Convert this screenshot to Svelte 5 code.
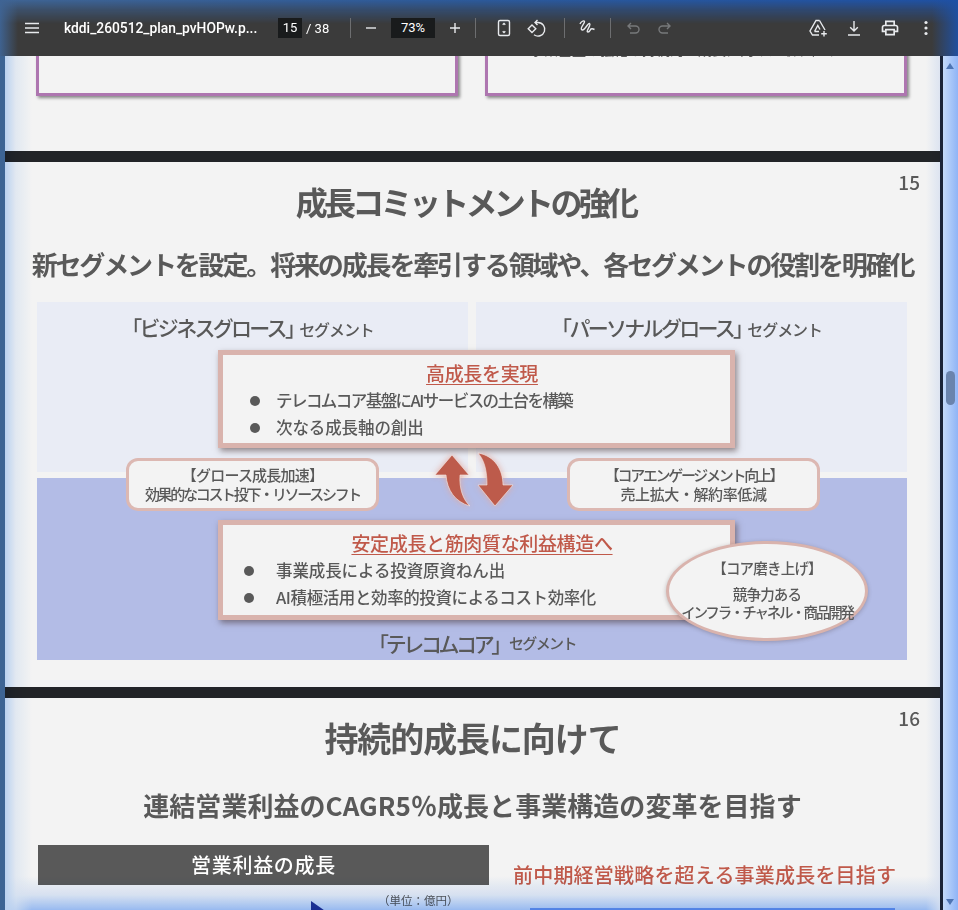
<script>
  let page = 15;
  let total = 38;
  let zoom = 73;

  // katakana-heavy lines sit tighter in the slide's font
  const growthPoints = [
    { text: 'テレコムコア基盤にAIサービスの土台を構築', fit: 'tight' },
    { text: '次なる成長軸の創出', fit: '' }
  ];
  const corePoints = [
    { text: '事業成長による投資原資ねん出', fit: '' },
    { text: 'AI積極活用と効率的投資によるコスト効率化', fit: 'mid' }
  ];
</script>

<div class="app">
  <header class="toolbar">
    <button class="icon menu" aria-label="menu">
      <svg viewBox="0 0 24 24"><path d="M5 7.500h14M5 12h14M5 16.500h14" /></svg>
    </button>
    <span class="filename">kddi_260512_plan_pvHOPw.p...</span>
    <span class="num page-num">{page}</span>
    <span class="total">/ {total}</span>
    <i class="sep first"></i>
    <button class="icon minus" aria-label="zoom out">
      <svg viewBox="0 0 24 24"><path d="M7 12h10" /></svg>
    </button>
    <span class="num zoom-num">{zoom}%</span>
    <button class="icon plus" aria-label="zoom in">
      <svg viewBox="0 0 24 24"><path d="M7 12h10M12 7v10" /></svg>
    </button>
    <i class="sep after-plus"></i>
    <button class="icon fit" aria-label="fit to page">
      <svg viewBox="0 0 24 24"><rect x="6.500" y="4.500" width="11" height="15" rx="1.500" /><path d="M10.700 8.700 12 7.500l1.300 1.200M10.700 15.300 12 16.500l1.300-1.200" /></svg>
    </button>
    <button class="icon rotate" aria-label="rotate">
      <svg viewBox="0 0 24 24"><path d="M8 9 11.800 12.800 8 16.600 4.200 12.800z" /><path d="M11 6.500h3a6.800 6.800 0 1 1-4 12.300M13.500 4 11 6.500 13.500 9" /></svg>
    </button>
    <i class="sep after-rotate"></i>
    <button class="icon draw" aria-label="annotate">
      <svg viewBox="0 0 24 24"><path d="M5 8c1-2.500 4-4 4.500-2.500S5 11.500 6.500 13.500s4-2 6-4.500 3-1.500 2 1-3.500 6-1.500 6 2-2.500 3-3 2.500 0 3.500.5" /></svg>
    </button>
    <i class="sep after-draw"></i>
    <button class="icon muted undo" aria-label="undo">
      <svg viewBox="0 0 24 24"><path d="M10 7 7 10l3 3M7 10h7.500a3.500 3.500 0 0 1 0 7H9" /></svg>
    </button>
    <button class="icon muted redo" aria-label="redo">
      <svg viewBox="0 0 24 24"><path d="m14 7 3 3-3 3M17 10H9.500a3.500 3.500 0 0 0 0 7H15" /></svg>
    </button>
    <span class="spacer"></span>
    <button class="icon" aria-label="save to drive">
      <svg viewBox="0 0 24 24"><path d="M13.500 4.500H10L4 15l2.500 4H13M13.500 4.500 19 14" /><path d="M8.500 15.500l3.300-6 2.200 4M8.500 15.500H13" /><path d="M18 15v5.500M15.200 17.800h5.600" /></svg>
    </button>
    <button class="icon" aria-label="download">
      <svg viewBox="0 0 24 24"><path d="M12 5v10M8.200 11.200 12 15l3.800-3.800M6 19h12" /></svg>
    </button>
    <button class="icon solid small" aria-label="print">
      <svg viewBox="0 0 24 24"><path d="M19 8h-1V3H6v5H5c-1.660 0-3 1.340-3 3v6h4v4h12v-4h4v-6c0-1.660-1.340-3-3-3zM8 5h8v3H8V5zm8 12v2H8v-4h8v2zm2-2v-2H6v2H4v-4c0-.55.45-1 1-1h14c.55 0 1 .45 1 1v4h-2z" /></svg>
    </button>
    <button class="icon solid" aria-label="more">
      <svg viewBox="0 0 24 24"><circle cx="12" cy="6.500" r="1.600" /><circle cx="12" cy="12" r="1.600" /><circle cx="12" cy="17.500" r="1.600" /></svg>
    </button>
  </header>

  <div class="viewer">
    <main class="pages">
      <section class="page tail">
        <div class="purple-card"></div>
        <div class="purple-card"><p>事業基盤の強化と持続的な成長に向けた取り組み</p></div>
      </section>

      <section class="page slide">
        <span class="page-no">15</span>
        <h1>成長コミットメントの強化</h1>
        <h2>新セグメントを設定。将来の成長を牽引する領域や、各セグメントの役割を明確化</h2>

        <div class="diagram">
          <div class="panel light"><b>「ビジネスグロース」</b><small>セグメント</small></div>
          <div class="panel light"><b>「パーソナルグロース」</b><small>セグメント</small></div>
          <div class="panel blue"><b>「テレコムコア」</b><small>セグメント</small></div>

          <div class="card growth">
            <h3>高成長を実現</h3>
            <ul>
              {#each growthPoints as point}
                <li class={point.fit}>{point.text}</li>
              {/each}
            </ul>
          </div>

          <div class="pill left-pill">
            <span>【グロース成長加速】</span>
            <span class="narrow">効果的なコスト投下・リソースシフト</span>
          </div>
          <div class="pill right-pill">
            <span class="narrow">【コアエンゲージメント向上】</span>
            <span class="wide">売上拡大・解約率低減</span>
          </div>

          <svg class="arrows" viewBox="430 450 88 60">
            <path d="M452 455 469 475H460C459 488 463 500 470 506 455 502 447 490 446 475H435Z" />
            <path d="M478 453C495 456 503 470 503 485H513L495 506 478 485H487C487 472 485 461 478 453Z" />
          </svg>

          <div class="card core">
            <h3>安定成長と筋肉質な利益構造へ</h3>
            <ul>
              {#each corePoints as point}
                <li class={point.fit}>{point.text}</li>
              {/each}
            </ul>
          </div>

          <div class="oval">
            <span class="oval-head">【コア磨き上げ】</span>
            <span>競争力ある</span>
            <span class="narrow">インフラ・チャネル・商品開発</span>
          </div>
        </div>
      </section>

      <section class="page slide next">
        <span class="page-no">16</span>
        <h1>持続的成長に向けて</h1>
        <h2>連結営業利益のCAGR5％成長と事業構造の変革を目指す</h2>
        <div class="columns">
          <div>
            <div class="dark-head">営業利益の成長</div>
            <div class="unit">（単位：億円）</div>
            <svg class="marker" viewBox="0 0 20 14"><path d="M0 0 20 14H0Z" /></svg>
          </div>
          <div>
            <div class="red-head">前中期経営戦略を超える事業成長を目指す</div>
            <div class="rule"></div>
          </div>
        </div>
      </section>
    </main>

    <aside class="scrollbar">
      <i class="up"></i>
      <i class="thumb"></i>
      <i class="down"></i>
    </aside>
  </div>

  <div class="glow"></div>
</div>

<style>
  :global(body) {
    margin: 0;
    background: #222427;
  }

  .app {
    position: relative;
    display: flex;
    flex-direction: column;
    width: 958px;
    height: 910px;
    overflow: hidden;
    font-family: "Noto Sans CJK JP", "Noto Sans", sans-serif;
    color: #595959;
  }

  /* toolbar */
  .toolbar {
    position: relative;
    z-index: 3;
    display: flex;
    align-items: center;
    flex: none;
    height: 56px;
    padding: 0 16px;
    box-sizing: border-box;
    background: #3b3b3b;
    color: #fff;
    font-family: Roboto, sans-serif;
    font-size: 13px;
  }

  .toolbar::before {
    content: '';
    position: absolute;
    inset: 0;
    pointer-events: none;
    background: linear-gradient(90deg, #3f6494, #2c5a9c 50%, #1f51a4);
    mask-image: linear-gradient(180deg, #000 0, rgba(0, 0, 0, 0.55) 9px, transparent 24px);
  }

  .toolbar::after {
    content: '';
    position: absolute;
    inset: 0;
    pointer-events: none;
    background:
      linear-gradient(90deg, rgba(63, 100, 148, 0.95), rgba(63, 100, 148, 0) 18px),
      linear-gradient(270deg, rgba(31, 81, 164, 0.95), rgba(31, 81, 164, 0) 26px);
  }

  .icon {
    position: relative;
    z-index: 1;
    flex: none;
    width: 32px;
    height: 32px;
    padding: 4px;
    border: 0;
    background: none;
    color: #e8eaed;
  }

  .icon svg {
    display: block;
    width: 24px;
    height: 24px;
    fill: none;
    stroke: currentColor;
    stroke-width: 1.400;
  }

  .icon.solid svg {
    fill: currentColor;
    stroke: none;
  }

  .icon.small svg {
    width: 20px;
    height: 20px;
    margin: 2px;
  }

  .icon.muted {
    color: #77797b;
  }

  .filename {
    position: relative;
    z-index: 1;
    width: 194px;
    margin-left: 16px;
    font-size: 13.800px;
    font-weight: 500;
    white-space: nowrap;
  }

  .num {
    position: relative;
    z-index: 1;
    height: 20px;
    line-height: 20px;
    background: #191b1c;
    text-align: center;
  }

  .page-num {
    width: 24px;
    margin-left: 20px;
  }

  .total {
    position: relative;
    z-index: 1;
    margin-left: 4px;
    width: 24px;
    white-space: nowrap;
  }

  .sep {
    position: relative;
    z-index: 1;
    flex: none;
    width: 1px;
    height: 20px;
    background: #6d6e70;
  }

  .first {
    margin: 0 4px 0 20px;
  }

  .zoom-num {
    width: 44px;
    margin: 0 4px;
  }

  .after-plus {
    margin: 0 12px 0 4px;
  }

  .after-rotate {
    margin: 0 6px 0 12px;
  }

  .after-draw {
    margin: 0 6px 0 7px;
  }

  .spacer {
    flex: 1;
  }

  .toolbar .icon + .icon:not(.rotate):not(.redo) {
    margin-left: 4px;
  }

  /* page column */
  .viewer {
    display: flex;
    flex: 1;
    min-height: 0;
    background: linear-gradient(90deg, #3d6494 5px, #222427 5px, #222427 940px, #1a2438 940px);
  }

  .pages {
    flex: none;
    width: 935px;
    margin-left: 5px;
    margin-right: 3px;
    display: flex;
    flex-direction: column;
    gap: 11px;
  }

  .page {
    flex: none;
    background: #f3f3f3;
    box-sizing: border-box;
  }

  .tail {
    display: grid;
    grid-template-columns: 422px 422px;
    grid-template-rows: 40px;
    justify-content: space-between;
    align-items: end;
    height: 95px;
    overflow: hidden;
    padding: 0 33px 55px 31px;
  }

  .purple-card {
    height: 70px;
    border: 3px solid #ae76b0;
    box-sizing: border-box;
    background: #f3f3f3;
    box-shadow: 2px 2px 3px rgba(0, 0, 0, 0.45);
  }

  .purple-card p {
    margin: 10px 0 0 -24px;
    font-size: 14px;
    line-height: 20px;
    text-align: center;
    color: #595959;
  }

  .slide {
    position: relative;
    height: 525px;
    padding: 0 32px;
  }

  .next {
    height: 300px;
  }

  .page-no {
    position: absolute;
    top: 8px;
    right: 20px;
    font-size: 19px;
    font-weight: 500;
    line-height: 24px;
  }

  h1 {
    margin: 0;
    padding: 16px 14px 0 0;
    font-size: 32px;
    line-height: 46px;
    font-weight: 700;
    text-align: center;
    letter-spacing: -3.700px;
  }

  h2 {
    margin: 21px -20px 0;
    font-size: 26px;
    line-height: 38px;
    font-weight: 700;
    text-align: center;
    letter-spacing: -2.150px;
    white-space: nowrap;
  }

  /* diagram */
  .diagram {
    position: relative;
    display: grid;
    grid-template-columns: 431px 431px;
    grid-template-rows: 170px 182px;
    gap: 6px 8px;
    margin-top: 19px;
    height: 358px;
  }

  .panel {
    display: flex;
    justify-content: center;
    align-items: baseline;
    padding: 11px 10px 0 0;
    box-sizing: border-box;
    background: #e9ecf5;
  }

  .panel.blue {
    grid-column: 1 / 3;
    align-items: flex-end;
    padding: 0 0 3px;
    background: #b3bce6;
  }

  .panel b {
    font-size: 21px;
    line-height: 28px;
    font-weight: 500;
    letter-spacing: -2.700px;
  }

  .panel small {
    margin-left: -4px;
    font-size: 16px;
    line-height: 28px;
    font-weight: 500;
    letter-spacing: -1.100px;
  }

  .panel.blue b {
    letter-spacing: -3.400px;
  }

  .panel.blue small {
    margin-left: 0;
    font-size: 15px;
    letter-spacing: -1.600px;
  }

  .card {
    position: absolute;
    left: 181px;
    width: 517px;
    box-sizing: border-box;
    border: 5px solid #d9b3ad;
    background: #f3f3f3;
    box-shadow: 2px 3px 6px rgba(70, 50, 50, 0.55);
  }

  .growth {
    top: 48px;
    height: 98px;
  }

  .core {
    top: 218px;
    height: 100px;
  }

  .card h3 {
    margin: 0 0 1px;
    padding: 4px 0 0 11px;
    font-size: 19px;
    line-height: 27px;
    font-weight: 500;
    text-align: center;
    color: #c0594a;
    text-decoration: underline;
    text-underline-offset: 3px;
    text-decoration-thickness: 1px;
    letter-spacing: -0.350px;
  }

  .card ul {
    margin: 0;
    padding: 0;
    list-style: none;
  }

  .card li {
    position: relative;
    width: fit-content;
    padding-left: 53px;
    font-size: 16.500px;
    line-height: 27px;
    font-weight: 500;
    letter-spacing: -0.100px;
  }

  .card li.tight {
    letter-spacing: -1.550px;
  }

  .card li.mid {
    letter-spacing: -0.400px;
  }

  .card li::before {
    content: '';
    position: absolute;
    left: 27px;
    top: 9px;
    width: 10px;
    height: 10px;
    border-radius: 50%;
    background: #595959;
  }

  .core li::before {
    left: 21px;
  }

  .pill {
    position: absolute;
    top: 156px;
    display: flex;
    flex-direction: column;
    align-items: center;
    width: 253px;
    height: 53px;
    box-sizing: border-box;
    padding-top: 4px;
    border: 3px solid #dcb8b2;
    border-radius: 12px;
    background: #f3f3f3;
    font-size: 15px;
    line-height: 19px;
    font-weight: 500;
    letter-spacing: -0.800px;
    white-space: nowrap;
  }

  .pill .narrow {
    letter-spacing: -2.300px;
  }

  .pill .wide {
    letter-spacing: -0.400px;
  }

  .left-pill {
    left: 89px;
  }

  .right-pill {
    left: 530px;
  }

  .arrows {
    position: absolute;
    left: 393px;
    top: 148px;
    width: 88px;
    height: 60px;
    overflow: visible;
    fill: #bd5b4b;
    stroke: #f5ece9;
    stroke-width: 0.600;
    filter: drop-shadow(0 0 3px rgba(226, 170, 160, 0.95));
  }

  .oval {
    position: absolute;
    left: 629px;
    top: 239px;
    display: flex;
    flex-direction: column;
    align-items: center;
    width: 202px;
    height: 100px;
    box-sizing: border-box;
    padding-top: 15px;
    border: 3px solid #d9b3ad;
    border-radius: 50%;
    background: #f3f3f3;
    box-shadow: 0 1px 4px rgba(70, 50, 50, 0.3);
    font-size: 14.500px;
    line-height: 18px;
    font-weight: 500;
    letter-spacing: -0.800px;
    white-space: nowrap;
  }

  .oval-head {
    margin-bottom: 8px;
  }

  .oval .narrow {
    letter-spacing: -2.200px;
  }

  /* next slide */
  .next h1 {
    padding: 17px 0 0;
    font-size: 34px;
    letter-spacing: -1.100px;
  }

  .next h2 {
    margin-top: 25px;
    letter-spacing: 0.050px;
  }

  .columns {
    display: grid;
    grid-template-columns: 451px 382px;
    gap: 24px;
    margin: 21px 0 0 1px;
  }

  .dark-head {
    height: 40px;
    line-height: 40px;
    background: #595959;
    color: #fff;
    font-size: 20px;
    font-weight: 500;
    text-align: center;
    letter-spacing: 0.700px;
  }

  .unit {
    margin: 7px 0 0 340px;
    font-size: 11.500px;
    line-height: 16px;
    white-space: nowrap;
    letter-spacing: 0;
  }

  .marker {
    display: block;
    width: 20px;
    height: 14px;
    margin: -7px 0 0 273px;
    fill: #253a94;
  }

  .red-head {
    margin-top: 15px;
    color: #c0594a;
    font-size: 20px;
    line-height: 30px;
    font-weight: 500;
    white-space: nowrap;
    letter-spacing: 0.200px;
  }

  .rule {
    height: 2px;
    margin: 18px 0 0 17px;
    background: #7fa8e8;
  }

  /* scrollbar */
  .scrollbar {
    position: relative;
    flex: none;
    width: 15px;
    background: linear-gradient(90deg, #c3dafa, #8fb4f6);
  }

  .scrollbar i {
    position: absolute;
  }

  .up,
  .down {
    left: 3px;
    width: 0;
    height: 0;
    border-left: 4.500px solid transparent;
    border-right: 4.500px solid transparent;
  }

  .up {
    top: 7px;
    border-bottom: 6px solid #4e75b4;
  }

  .down {
    bottom: 5px;
    border-top: 6px solid #4e75b4;
  }

  .thumb {
    top: 315px;
    left: 3px;
    width: 9px;
    height: 34px;
    border-radius: 5px;
    background: #6a84ad;
  }

  /* window glow over the page edges, multiplied so dark parts stay dark */
  .glow {
    position: absolute;
    top: 56px;
    bottom: 0;
    left: 5px;
    width: 935px;
    z-index: 2;
    pointer-events: none;
    mix-blend-mode: multiply;
    background:
      linear-gradient(90deg, rgba(196, 220, 252, 1), rgba(226, 238, 252, 0.6) 11px, rgba(255, 255, 255, 0) 27px),
      linear-gradient(270deg, rgba(226, 236, 252, 0.8), rgba(255, 255, 255, 0) 14px),
      linear-gradient(0deg, rgba(160, 196, 252, 1), rgba(222, 234, 252, 0.9) 15px, rgba(255, 255, 255, 0) 34px),
      #fff;
  }
</style>
